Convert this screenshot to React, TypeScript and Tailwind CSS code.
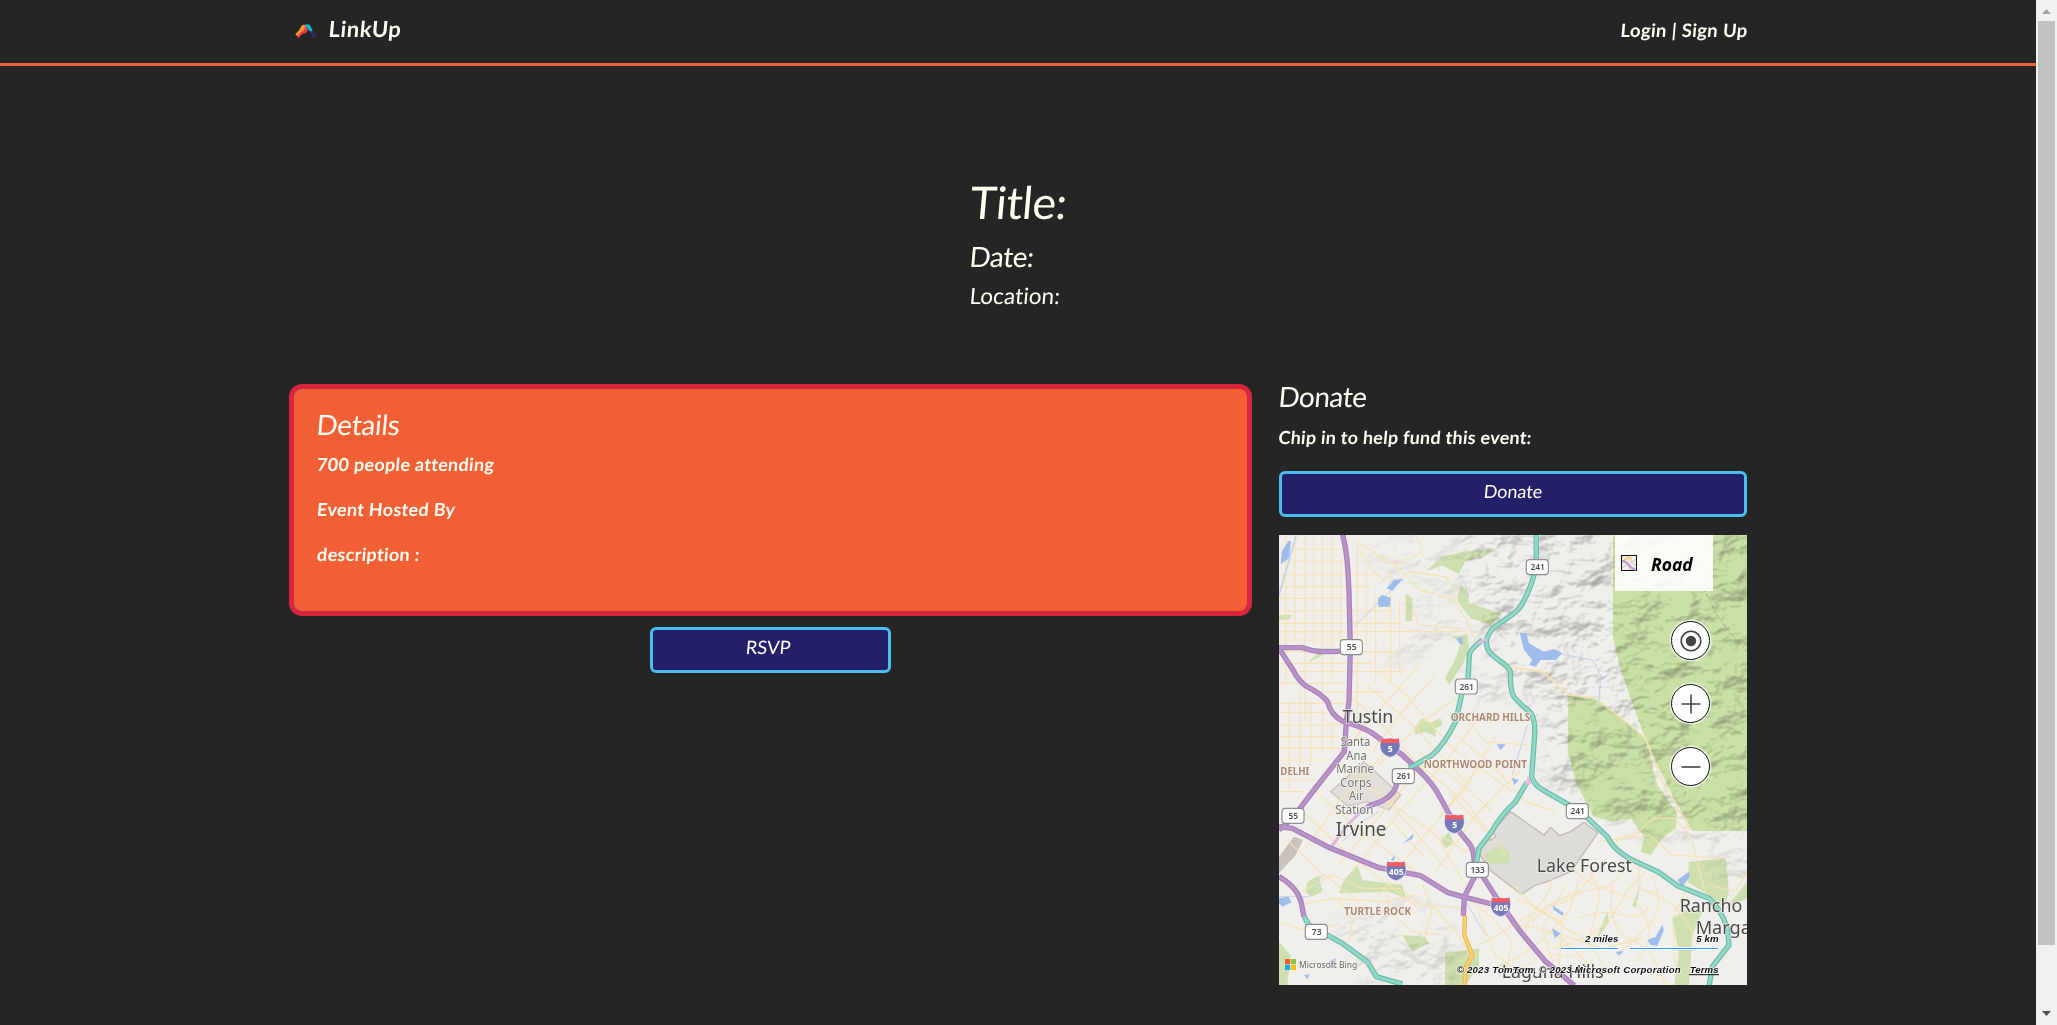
import React from "react";

const sans = "font-['Lato','Open_Sans',sans-serif]";

function Slant({ children, className = "" }: { children: React.ReactNode; className?: string }) {
  return <span className={`-ml-px inline-block origin-[0_80%] -skew-x-[5deg] ${className}`}>{children}</span>;
}

function Logo() {
  return (
    <svg className="h-[14px] w-[22px]" viewBox="0 0 66 42" fill="none">
      <path d="M44 14 L52 18 L56 26 L64 33 L64 37 L57 41 L45 28z" fill="#312c66" />
      <path d="M27 5 L32 1 L44 2 L48 10 L53 19 L47 23 L41 19 L37 11 L30 13z" fill="#0fb4d2" />
      <path d="M2 30 L12 20 L20 6 L26 2 L31 3 L34 12 L38 14 L37 22 L30 28 L22 29 L10 41z" fill="#f9573c" />
      <path d="M1 31 L13 19 L20 5 L26 2 L30 4 L26 18 L14 28 L6 36z" fill="#ff962b" />
      <path d="M8 40 L20 26 L36 12 L38 20 L32 27 L21 30 L13 41z" fill="#ed2e4d" />
    </svg>
  );
}

const gridStreets = [
  "M20 0V440M48 0V310M78 0V560M104 0V330M130 0V480M158 0V430M185 80V330M235 30V580M262 100V330M290 180V440M335 110V440M362 200V420",
  "M0 42H190M20 78H205M0 120H300M0 155H270M0 190H200M0 228H340M0 265H360M0 290H560M0 315H200M0 350H350M0 385H280M60 410H370M0 445H200M140 470H320",
  "M0 505H210M0 532H140M0 570H190M0 605H180M0 640H190M0 675H150M30 500V760M62 470V720M95 500V690M130 520V660M160 560V640M0 735H110M0 770H75",
  "M230 20L350 90L430 50L410 0M350 90L420 165L520 190L560 250L590 320M240 40L265 90L320 140M390 110L500 125L530 170M400 220L420 270L540 280",
];

const cityStreets = [
  "M210 480L300 560L420 690L560 800L680 960M250 440L400 570L560 740M300 410L380 480L520 640L700 770M180 690L330 800L470 900L560 1050M100 760L260 900L410 1010M60 820L200 950L330 1050L420 1120M20 910L110 1000L240 1100",
  "M420 390L350 470L260 570L210 630M470 420L360 540L280 650M560 470L430 560L300 690M590 560L500 680L370 820L220 1010M650 600L560 760L420 920L300 1080M720 710L590 840L470 1010M330 640L180 800L80 940M430 690L330 810L180 990",
  "M420 650L540 740L640 830M530 600L640 690L740 800L830 830M560 550L620 620L750 630M600 690L550 760L480 850M510 770L620 890M480 900L560 950L630 920M340 860L430 960M290 760L400 880L500 1000",
  "M70 1070L160 1020L250 1060L360 1060L430 1110L560 1120M60 1110L160 1090L310 1100L410 1080M180 1090L220 1160L210 1220M320 1060L330 1130L400 1190L490 1200M430 1050L460 1120L440 1200M0 1160L90 1190L170 1170M460 1110L540 1200L580 1280",
  "M560 1080L650 1160L700 1220L680 1310M600 1230Q660 1200 720 1160T830 1110T950 1010M640 1300Q720 1270 770 1230T870 1130L900 1030M690 1170Q760 1170 810 1190T930 1290M710 1090Q770 1110 820 1150T900 1200T990 1320M820 1030Q810 1080 780 1110T730 1220M870 980Q890 1020 930 1040T1060 1090Q1100 1130 1110 1180T1070 1280",
  "M730 1310Q770 1260 820 1260T900 1270M760 1160Q800 1110 850 1090T960 1060T1040 980M830 1240Q910 1220 960 1180T1040 1070L1100 1010M930 1010Q970 1060 960 1100T930 1210M1080 970L1080 1060Q1150 1080 1190 1120T1250 1220M1120 1020Q1150 1100 1130 1140T1010 1260M1010 920L1080 890L1120 850L1190 850M1190 850L1240 920L1280 1080M1220 1070L1180 1150L1190 1300M1290 1050L1370 1070L1404 1010M960 920L1110 900L1180 960L1330 970",
  "M600 1140L650 1260L760 1340M700 1050L780 1130L850 1160L840 1300M860 1050L790 1180L830 1310M1000 1050Q990 1130 1010 1170T1110 1240L1160 1350M900 1150Q970 1120 1030 1140T1110 1110M850 1200L970 1240L1090 1210",
];

const purple = [
  "M190 -5C204 50 206 85 210 170L214 340L210 500L202 560L196 650L105 765L40 850L0 885",
  "M-5 338H70C105 350 130 354 214 346",
  "M0 340L42 405Q60 440 84 455Q125 475 146 500Q155 540 190 558Q245 575 275 591L370 660L428 714Q465 750 485 790L536 884L574 930Q585 950 586 985L615 1030L660 1100L726 1192L800 1280L886 1352",
  "M0 875L40 880L145 935L300 998L425 1022L505 1072L550 1085L650 1110L690 1138",
  "M0 1025Q60 1060 68 1110L75 1145",
  "M354 740Q350 780 300 802L265 815",
  "M592 1015L556 1085L553 1142",
];

const teal = [
  "M772 -5V90Q762 150 725 215C690 260 630 265 622 320C622 370 680 375 694 410C694 490 700 485 755 533Q770 555 767 600L758 725Q765 752 800 770L905 830L985 905Q1000 940 1050 970L1140 1012L1195 1052L1290 1090Q1325 1120 1345 1180L1350 1230L1300 1295L1290 1355",
  "M610 315Q572 345 571 360L567 430L552 460L530 560Q495 630 460 660L390 700",
  "M745 740L710 800Q665 840 638 890L600 940L592 985",
  "M76 1145Q95 1190 145 1200L190 1225L265 1280L292 1325L370 1347",
];

const woods = [
  "M1002 0H1404V888H1240L1190 800L1110 640L1080 560L1030 420L1002 310z",
  "M868 480L945 492L990 520L1060 575L1100 610L1135 750L1195 835L1190 880L1150 910L1115 960L1085 950L1095 905L1055 850L1000 860L945 845L915 790L890 740L866 650z",
];

const parks = [
  "M440 108L490 65L560 48L640 45L610 68L560 76L540 118L490 92z",
  "M545 150L568 175L570 205L668 235L635 270L575 250L535 200z",
  "M380 175L400 190V258H380z",
  "M520 305L565 297L570 340L550 390L510 450L498 430L530 370L545 325z",
  "M405 580L430 550L450 565L485 550L490 570L470 580L470 605L440 590L410 598z",
  "M1180 1150L1230 1120L1270 1130L1240 1200L1230 1350H1185L1200 1260z",
  "M1230 980L1340 970L1350 1070L1335 1120L1290 1080L1225 1040z",
  "M1404 1040L1340 1120L1404 1090z",
  "M85 1040L120 1020L130 1070L95 1085L80 1070z",
  "M195 1035L235 990L250 1035L370 1050L380 1090L330 1070L180 1075z",
  "M370 1200L440 1205L450 1225L400 1250z",
  "M498 1255L600 1240L600 1290L560 1350H498z",
  "M485 915L510 890L525 925L500 940z",
  "M0 240L38 240L30 255H0z",
  "M85 385L170 340L130 340z",
  "M0 1220L35 1260L25 1350H0z",
  "M1060 1110L1080 1060L1090 1020L1070 1120z",
  "M950 1220L990 1160L985 1130L960 1190z",
];

const lakes = [
  "M722 294H742L750 325L795 350L825 342L850 355L830 375L785 375L770 395L750 390L760 375L735 345z",
  "M8 50L28 18H36L30 70L5 88z",
  "M297 190L310 180L335 188L333 215H298zM322 160L345 135L370 132L340 168z",
  "M533 310L550 305L552 330L540 325z",
  "M652 628L680 628L665 646z",
  "M698 728L720 735L706 750z",
  "M372 925L405 895L400 912z",
  "M335 975L348 960L345 978z",
  "M0 1090L28 1085L38 1102L10 1115L0 1105z",
  "M1195 1035L1230 1010L1232 1025L1210 1055z",
  "M1105 1215L1130 1205L1150 1170L1155 1185L1135 1232L1115 1230z",
  "M820 1110L855 1135L850 1142L825 1125zM818 1180L845 1195L828 1210z",
  "M150 1280L170 1270L168 1300L150 1300z",
  "M1010 1250L1035 1248L1020 1262z",
  "M75 1320L92 1318L86 1333z",
];

function Shield({ x, y, n }: { x: number; y: number; n: string }) {
  return (
    <g>
      <rect x={x - 33} y={y - 22} width="66" height="45" rx="10" fill="#fff" stroke="#8d8d8d" strokeWidth="3.5" />
      <text x={x + 1} y={y + 10} textAnchor="middle" fontSize="28" fontWeight="600" fill="#4d4d4d" textLength={n.length * 14.5} lengthAdjust="spacingAndGlyphs">
        {n}
      </text>
    </g>
  );
}

function Interstate({ x, y, n }: { x: number; y: number; n: string }) {
  return (
    <g>
      <path d={`M${x - 25} ${y - 29}Q${x} ${y - 20} ${x + 25} ${y - 29}Q${x + 34} ${y - 7} ${x + 27} ${y + 8}Q${x + 20} ${y + 24} ${x} ${y + 29}Q${x - 20} ${y + 24} ${x - 27} ${y + 8}Q${x - 34} ${y - 7} ${x - 25} ${y - 29}z`} fill="#7679b8" stroke="#eef" strokeWidth="2" />
      <path d={`M${x - 27} ${y - 14}V${y - 28}L${x - 20} ${y - 25}L${x} ${y - 28}L${x + 20} ${y - 25}L${x + 27} ${y - 28}V${y - 14}z`} fill="#f95b60" />
      <text x={x + 1} y={y + 13} textAnchor="middle" fontSize="28" fontWeight="700" fill="#fff" textLength={n.length * 15} lengthAdjust="spacingAndGlyphs">
        {n}
      </text>
    </g>
  );
}

type LabelProps = { x: number; y: number; w: number; size: number; color?: string; bold?: boolean; children: string };

function Label({ x, y, w, size, color = "#4a4a4a", bold, children }: LabelProps) {
  return (
    <text
      x={x}
      y={y}
      fontSize={size}
      fontWeight={bold ? 700 : 400}
      fill={color}
      stroke="#f4f2ef"
      strokeOpacity="0.85"
      strokeWidth="5"
      strokeLinejoin="round"
      paintOrder="stroke"
      textLength={w}
      lengthAdjust="spacingAndGlyphs"
    >
      {children}
    </text>
  );
}

function MapArt() {
  return (
    <svg className="block h-full w-full font-['Noto_Sans','Open_Sans',sans-serif] tracking-normal not-italic" viewBox="0 0 1404 1350">
      <defs>
        <filter id="relief" x="0" y="0" width="100%" height="100%" colorInterpolationFilters="sRGB">
          <feTurbulence type="fractalNoise" baseFrequency="0.008 0.011" numOctaves="4" seed="8" result="n" />
          <feDiffuseLighting in="n" surfaceScale="36" lightingColor="#ffffff" diffuseConstant="1.22">
            <feDistantLight azimuth="235" elevation="56" />
          </feDiffuseLighting>
        </filter>
        <filter id="soft">
          <feGaussianBlur stdDeviation="28" />
        </filter>
        <mask id="hills">
          <g filter="url(#soft)" fill="#fff">
            <path d="M600 -60H1480V900H1200L1100 900L900 800L800 740L790 560L720 440L620 340L590 170L540 60z" />
            <path d="M240 20L560 0L560 300L440 380L300 370L420 250z" opacity="0.35" />
            <path d="M560 380L700 440L660 520L580 520z" opacity="0.7" />
            <path d="M150 1180L420 1090L560 1220L500 1400H300z" opacity="0.5" />
            <path d="M1290 880H1480V1080H1300z" opacity="0.5" />
          </g>
        </mask>
      </defs>
      <rect width="1404" height="1350" fill="#f1efec" />
      <g fill="#cfe0b0">
        {parks.map((d) => (
          <path key={d} d={d} />
        ))}
      </g>
      <g fill="#cae0a6">
        {woods.map((d) => (
          <path key={d} d={d} />
        ))}
      </g>
      <g mask="url(#hills)" style={{ mixBlendMode: "multiply" }}>
        <rect width="1404" height="1350" filter="url(#relief)" opacity="0.3" />
      </g>
      <path d="M155 770L255 680L365 780L330 825L265 800L205 812z" fill="#e2dfda" stroke="#c9c4bd" strokeWidth="4" />
      <path d="M695 830L795 900L815 877L842 902L875 890L915 862L957 893L875 1010L805 1040L770 1050L728 1078L632 1005L590 940L650 905L640 890z" fill="#dedcd8" stroke="#c3bbb4" strokeWidth="4" />
      <path d="M615 960L660 930L690 950L690 985L625 985z" fill="#cfe0b0" />
      <path d="M0 965L45 905L72 915L50 960L0 1015z" fill="#cbc2bc" />
      <g fill="none" stroke="#f5e3b0" strokeWidth="3.6" strokeLinejoin="round" opacity="0.9">
        {gridStreets.concat(cityStreets).map((d) => (
          <path key={d} d={d} />
        ))}
        <path d="M680 395L790 410L870 480L950 490L1040 560L1100 610L1150 740L1235 885" strokeWidth="5" />
      </g>
      <g fill="none" stroke="#c4d2e8" strokeWidth="3">
        <path d="M52 0L0 180" strokeWidth="5" />
        <path d="M375 130L300 200L225 275M540 120L560 150L568 190M850 358L940 375L965 420L960 500M745 570L700 720M190 920L250 860L300 830M0 1085H90L130 1020M480 1050L560 1100L620 1200" />
      </g>
      <g fill="#9fbdec">
        {lakes.map((d) => (
          <path key={d} d={d} />
        ))}
      </g>
      <path d="M265 812L205 870L150 945" fill="none" stroke="#d9b8e0" strokeWidth="9" />
      <path d="M558 1142L556 1200L580 1262L558 1300V1350" fill="none" stroke="#e5b253" strokeWidth="13" />
      <path d="M558 1142L556 1200L580 1262L558 1300V1350" fill="none" stroke="#fbd06a" strokeWidth="8" />
      <g fill="none" strokeLinejoin="round">
        {purple.map((d) => (
          <path key={d} d={d} stroke="#a283b6" strokeWidth="16" />
        ))}
        {purple.map((d) => (
          <path key={d} d={d} stroke="#ba92c9" strokeWidth="9.5" />
        ))}
        {teal.map((d) => (
          <path key={d} d={d} stroke="#6fb8a5" strokeWidth="16" />
        ))}
        {teal.map((d) => (
          <path key={d} d={d} stroke="#8fd9c8" strokeWidth="9.5" />
        ))}
        <path d="M598 326L622 312M737 742H757M748 725V750" stroke="#e3bbdf" strokeWidth="8" />
      </g>
      <path d="M1245 120L1290 190L1310 235L1350 290L1404 350" fill="none" stroke="#8f9f7c" strokeWidth="2.5" strokeDasharray="16 7 4 7" />

      <Shield x={217} y={336} n="55" />
      <Shield x={775} y={96} n="241" />
      <Shield x={562} y={454} n="261" />
      <Shield x={373} y={723} n="261" />
      <Shield x={42} y={842} n="55" />
      <Shield x={895} y={828} n="241" />
      <Shield x={595} y={1004} n="133" />
      <Shield x={112} y={1190} n="73" />
      <Interstate x={333} y={638} n="5" />
      <Interstate x={526} y={867} n="5" />
      <Interstate x={351} y={1008} n="405" />
      <Interstate x={665} y={1116} n="405" />

      <Label x={191} y={564} w={152} size={55}>Tustin</Label>
      <Label x={170} y={902} w={152} size={58}>Irvine</Label>
      <Label x={773} y={1010} w={286} size={54}>Lake Forest</Label>
      <Label x={1202} y={1131} w={188} size={54}>Rancho</Label>
      <Label x={1250} y={1196} w={166} size={54}>Marga</Label>
      <Label x={668} y={1328} w={306} size={54}>Laguna Hills</Label>
      <Label x={185} y={633} w={89} size={36} color="#757575">Santa</Label>
      <Label x={202} y={674} w={61} size={36} color="#757575">Ana</Label>
      <Label x={172} y={714} w={113} size={36} color="#757575">Marine</Label>
      <Label x={184} y={756} w={93} size={36} color="#757575">Corps</Label>
      <Label x={210} y={795} w={44} size={36} color="#757575">Air</Label>
      <Label x={169} y={837} w={114} size={36} color="#757575">Station</Label>
      <Label x={515} y={558} w={239} size={30} color="#ab8a73" bold>ORCHARD HILLS</Label>
      <Label x={434} y={699} w={310} size={30} color="#ab8a73" bold>NORTHWOOD POINT</Label>
      <Label x={4} y={720} w={87} size={30} color="#ab8a73" bold>DELHI</Label>
      <Label x={196} y={1140} w={200} size={30} color="#ab8a73" bold>TURTLE ROCK</Label>

      <rect x="18" y="1272" width="15.5" height="15.5" fill="#f1592a" />
      <rect x="35.5" y="1272" width="15.5" height="15.5" fill="#8cc63e" />
      <rect x="18" y="1289.5" width="15.5" height="15.5" fill="#10aeef" />
      <rect x="35.5" y="1289.5" width="15.5" height="15.5" fill="#fdc010" />
      <Label x={60} y={1299} w={175} size={29} color="#6a6a6a">Microsoft Bing</Label>

      <g fontFamily="Liberation Sans, Arial, sans-serif">
        <g fontStyle="italic" fontWeight="700" fontSize="29" fill="#111" stroke="#fff" strokeOpacity="0.7" strokeWidth="5" paintOrder="stroke" strokeLinejoin="round">
          <text x="918" y="1221" textLength="100">2 miles</text>
          <text x="1252" y="1221" textLength="67">5 km</text>
          <text x="533" y="1314" textLength="672">© 2023 TomTom, © 2023 Microsoft Corporation</text>
          <text x="1232" y="1314" textLength="87">Terms</text>
        </g>
        <path d="M1230 1319H1320" stroke="#111" strokeWidth="3" />
        <path d="M845 1240.5H1018M1052 1240.5H1318" stroke="#fff" strokeWidth="9" />
        <path d="M846 1240.5H1017M1053 1240.5H1317" stroke="#3b96fb" strokeWidth="3.5" />
      </g>
    </svg>
  );
}

function RoundButton({ children }: { children: React.ReactNode }) {
  return (
    <button className="flex size-[39px] items-center justify-center rounded-full border border-[#111] bg-white shadow-[0_0_0_1.5px_rgba(255,255,255,0.6)]">
      <svg className="size-[22px]" viewBox="0 0 22 22" fill="none" stroke="#444" strokeWidth="1.6">
        {children}
      </svg>
    </button>
  );
}

function EventMap() {
  return (
    <div className="relative mt-[18px] h-[450px] w-[468px] overflow-hidden">
      <MapArt />
      <div className="absolute top-0 right-[34px] flex h-14 w-[98px] items-center bg-white/90 pl-1.5">
        <svg className="size-4" viewBox="0 0 48 48" fill="none">
          <rect x="1.5" y="1.5" width="45" height="45" fill="#efede8" stroke="#111" strokeWidth="3" />
          <path d="M20 3L45 35M4 38L45 12M28 44L20 25" stroke="#d8cfc2" strokeWidth="3" />
          <path d="M8 18Q16 4 32 10" stroke="#f8c860" strokeWidth="5" />
          <path d="M3 18Q14 18 22 29T45 45" stroke="#bd93d2" strokeWidth="6" />
        </svg>
        <span className="mt-0.5 ml-[14px] font-['Open_Sans','Noto_Sans',sans-serif] text-[17.5px] leading-6 font-bold text-black italic">Road</span>
      </div>
      <div className="absolute top-[86px] right-[37px] flex flex-col gap-6">
        <RoundButton>
          <circle cx="11" cy="11" r="9.8" />
          <circle cx="11" cy="11" r="5.2" fill="#444" stroke="none" />
        </RoundButton>
        <RoundButton>
          <path d="M11 1.5V20.5M1.5 11H20.5" />
        </RoundButton>
        <RoundButton>
          <path d="M1.5 11H20.5" />
        </RoundButton>
      </div>
    </div>
  );
}

function ScrollBar() {
  return (
    <div className="flex h-full w-[21px] flex-col items-center bg-[#f1f1f1]">
      <svg className="h-[21px] w-[17px]" viewBox="0 0 17 21">
        <path d="M4 14L8.5 9L13 14z" fill="#a3a3a3" />
      </svg>
      <div className="h-[924px] w-[17px] bg-[#c1c1c1]" />
      <div className="grow" />
      <svg className="h-[21px] w-[17px]" viewBox="0 0 17 21">
        <path d="M4 7L8.5 12L13 7z" fill="#505050" />
      </svg>
    </div>
  );
}

export default function App() {
  return (
    <div className={`flex h-[1025px] w-full overflow-hidden bg-[#252525] whitespace-nowrap text-[#fffff2] ${sans}`}>
      <div className="min-w-0 grow">
        <header className="h-[66px] border-b-3 border-[#f46036]">
          <div className="mx-auto flex h-[60px] w-[1458px] items-center justify-between">
            <div className="flex items-center pt-px pl-1.5">
              <Logo />
              <Slant className="-mt-1 pl-3 text-[22px] leading-6 font-bold tracking-[0.6px]">LinkUp</Slant>
            </div>
            <a className="text-[18.5px] leading-6 font-bold tracking-[0.35px]">
              <Slant>Login | Sign Up</Slant>
            </a>
          </div>
        </header>

        <main className="mx-auto w-[1458px] pt-[114px]">
          <section className="mx-auto w-[97px]">
            <h1 className="text-[45px] leading-[45px] tracking-[-0.4px]"><Slant>Title:</Slant></h1>
            <h2 className="mt-[17px] text-[28px] leading-7 tracking-[-0.5px]"><Slant>Date:</Slant></h2>
            <h3 className="mt-[15px] text-[22.5px] leading-[22px] tracking-[0.1px]"><Slant>Location:</Slant></h3>
          </section>

          <div className="mt-[74px] flex justify-between">
            <section className="mt-[3px] flex w-[963px] flex-col items-center">
              <div className="h-[232px] w-full rounded-[13px] border-5 border-[#d7263d] bg-[#f46036] px-[23px] pt-[21px]">
                <h2 className="text-[28px] leading-7 tracking-[-0.3px]"><Slant>Details</Slant></h2>
                <div className="mt-1 text-[18px] leading-[45px] font-bold tracking-[0.3px]">
                  <p><Slant>700 people attending</Slant></p>
                  <p><Slant>Event Hosted By</Slant></p>
                  <p><Slant>description :</Slant></p>
                </div>
              </div>
              <button className="mt-[11px] h-[46px] w-[241px] rounded-md border-3 border-[#49beec] bg-[#241f69] pr-1 pb-1 text-[18.5px] text-white">
                <Slant>RSVP</Slant>
              </button>
            </section>

            <aside className="w-[468px]">
              <h2 className="pt-px text-[28px] leading-7 tracking-[-0.5px]"><Slant>Donate</Slant></h2>
              <p className="mt-[15px] text-[18px] leading-6 font-bold tracking-[0.25px]">
                <Slant>Chip in to help fund this event:</Slant>
              </p>
              <button className="mt-[22px] block h-[46px] w-full rounded-md border-3 border-[#49beec] bg-[#241f69] pb-1.5 text-[18px] text-white">
                <Slant>Donate</Slant>
              </button>
              <EventMap />
            </aside>
          </div>
        </main>
      </div>
      <ScrollBar />
    </div>
  );
}
